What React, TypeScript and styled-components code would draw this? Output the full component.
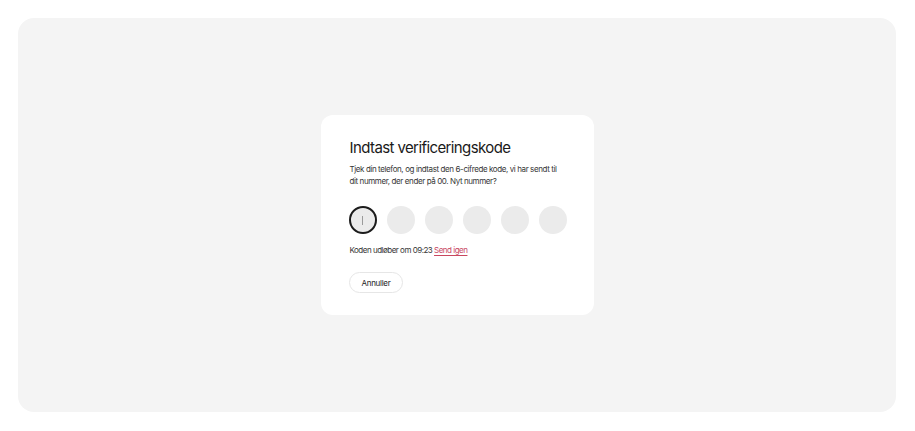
import React from "react";
import styled, { createGlobalStyle } from "styled-components";

const Global = createGlobalStyle`
  html, body { margin: 0; padding: 0; background: #ffffff; }
  body { font-family: Inter, "Noto Sans", "Liberation Sans", sans-serif; -webkit-font-smoothing: antialiased; }
  * { box-sizing: border-box; }
`;

const Page = styled.div`
  width: 915px;
  height: 431px;
  padding: 18px 19px 19px 18px;
  display: flex;
`;

const Backdrop = styled.div`
  flex: 1;
  background: #f4f4f4;
  border-radius: 16px;
  display: flex;
  align-items: center;
  justify-content: center;
`;

const Card = styled.div`
  width: 273px;
  height: 200px;
  background: #ffffff;
  border-radius: 12px;
  padding: 23px 28px 22px 29px;
  display: flex;
  flex-direction: column;
  align-items: flex-start;
`;

const Title = styled.h1`
  margin: 0;
  font-size: 15px;
  line-height: 20px;
  font-weight: 400;
  color: #1a1a1a;
  letter-spacing: -0.6px;
`;

const Text = styled.p`
  margin: 5px 0 0;
  font-size: 8px;
  line-height: 12px;
  color: #363636;
  letter-spacing: -0.4px;
`;

const Digits = styled.div`
  margin-top: 19px;
  margin-left: -1px;
  display: flex;
  gap: 10px;
`;

const Digit = styled.div<{ $active?: boolean }>`
  width: 28px;
  height: 28px;
  border-radius: 50%;
  background: #ebebeb;
  border: ${(p) => (p.$active ? "2px solid #1c1c1c" : "none")};
  display: flex;
  align-items: center;
  justify-content: center;
`;

const Caret = styled.span`
  width: 1px;
  height: 9px;
  background: #9a9a9a;
`;

const Expiry = styled.p`
  margin: 10px 0 0;
  font-size: 8px;
  line-height: 12px;
  color: #363636;
  letter-spacing: -0.5px;
`;

const Resend = styled.a`
  color: #c8475f;
  text-decoration: underline;
  text-underline-offset: 1.5px;
  cursor: pointer;
`;

const CancelButton = styled.button`
  margin-top: 16px;
  margin-left: -1px;
  height: 22px;
  padding: 0 12px;
  border-radius: 11px;
  border: 1px solid #e6e6e6;
  background: #ffffff;
  font-family: inherit;
  font-size: 8px;
  letter-spacing: -0.3px;
  color: #1c1c1c;
  cursor: pointer;
`;

export default function App() {
  return (
    <>
      <Global />
      <Page>
        <Backdrop>
          <Card>
            <Title>Indtast verificeringskode</Title>
            <Text>
              Tjek din telefon, og indtast den 6-cifrede kode, vi har sendt til
              dit nummer, der ender på 00. Nyt nummer?
            </Text>
            <Digits>
              {Array.from({ length: 6 }).map((_, i) => (
                <Digit key={i} $active={i === 0}>
                  {i === 0 && <Caret />}
                </Digit>
              ))}
            </Digits>
            <Expiry>
              Koden udløber om 09:23 <Resend>Send igen</Resend>
            </Expiry>
            <CancelButton>Annuller</CancelButton>
          </Card>
        </Backdrop>
      </Page>
    </>
  );
}
